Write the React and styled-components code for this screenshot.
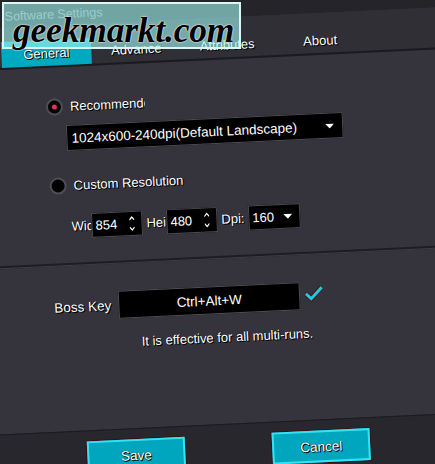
import React from 'react';
import styled, { createGlobalStyle } from 'styled-components';

const GlobalStyle = createGlobalStyle`
  html, body {
    margin: 0;
    padding: 0;
    width: 435px;
    height: 464px;
    overflow: hidden;
    background: #2a2930;
  }
  body {
    font-family: "Liberation Sans", Arial, sans-serif;
  }
`;

const Stage = styled.div`
  position: relative;
  width: 435px;
  height: 464px;
  overflow: hidden;
`;

// the photo is slightly tilted, so the whole window is rotated a touch
const Window = styled.div`
  width: 485px;
  height: 514px;
  margin: -25px;
  display: flex;
  flex-direction: column;
  background: #35343c;
  transform: rotate(-2.7deg);
  color: #fff;
  font-size: 13px;
  text-shadow: 0 0 1px #000, 1px 1px 0 #000;
`;

const TitleBar = styled.div`
  height: 43px;
  box-sizing: border-box;
  display: flex;
  align-items: flex-end;
  padding: 0 0 4px 40px;
  background: #252429;
  color: #8d8c93;
  font-size: 12.5px;
  line-height: 14px;
  text-shadow: none;
`;

const TabBar = styled.div`
  height: 40px;
  display: flex;
  align-items: flex-end;
  padding-left: 35px;
  background: #302f36;
  border-bottom: 2px solid #1b1a1f;
`;

const Tab = styled.div`
  width: ${p => p.$w || 90}px;
  height: 26px;
  display: flex;
  align-items: center;
  justify-content: center;
  background: ${p => (p.$active ? '#00a8c0' : 'transparent')};
`;

const Body = styled.div`
  flex: 1;
  display: flex;
  flex-direction: column;
`;

const TopSection = styled.div`
  padding: 31px 0 0 77px;
  display: flex;
  flex-direction: column;
`;

const RadioRow = styled.div`
  display: flex;
  align-items: center;
  gap: 7px;
  height: 17px;
  margin-top: ${p => p.$gap || 0}px;
`;

const Radio = styled.span`
  position: relative;
  width: 17px;
  height: 17px;
  box-sizing: border-box;
  border-radius: 50%;
  background: #000;
  border: 2px solid #4f4e55;
  &::after {
    content: '';
    display: ${p => (p.$checked ? 'block' : 'none')};
    position: absolute;
    left: 4px;
    top: 4px;
    width: 5px;
    height: 5px;
    border-radius: 50%;
    background: #ec2a72;
  }
`;

const Clip = styled.span`
  width: ${p => p.$w}px;
  overflow: hidden;
  white-space: nowrap;
  flex-shrink: 0;
`;

const Select = styled.div`
  margin: 10px 0 0 19px;
  width: 277px;
  height: 26px;
  box-sizing: border-box;
  background: #000;
  border: 1px solid #4d4c53;
  display: flex;
  align-items: center;
  justify-content: space-between;
  padding: 0 8px 0 4px;
  font-size: 13.5px;
`;

const Caret = () => (
  <svg width="9" height="5" viewBox="0 0 9 5">
    <path d="M0 0 H9 L4.5 5 Z" fill="#fff" />
  </svg>
);

const SizeRow = styled.div`
  margin: 20px 0 0 20px;
  display: flex;
  align-items: center;
  height: 25px;
`;

const Field = styled.div`
  width: ${p => p.$w}px;
  height: 25px;
  box-sizing: border-box;
  background: #000;
  border: 1px solid #48474e;
  display: flex;
  align-items: center;
  justify-content: space-between;
  padding: 0 7px 0 3px;
  margin: 0 4px 0 0;
`;

const Spin = () => (
  <svg width="5" height="15" viewBox="0 0 5 15">
    <path d="M0 4 L2.5 1 L5 4" stroke="#fff" strokeWidth="1.2" fill="none" />
    <path d="M0 11 L2.5 14 L5 11" stroke="#fff" strokeWidth="1.2" fill="none" />
  </svg>
);

const Divider = styled.div`
  margin-top: 24px;
  height: 2px;
  background: #1e1d22;
  border-bottom: 1px solid #3e3d45;
`;

const BossSection = styled.div`
  padding-left: 76px;
  margin-top: 27px;
`;

const BossRow = styled.div`
  display: flex;
  align-items: center;
  gap: 4px;
  font-size: 13.5px;
`;

const BossLabel = styled.span`
  margin-right: 3px;
`;

const KeyBox = styled.div`
  width: 182px;
  height: 28px;
  box-sizing: border-box;
  background: #000;
  border: 1px solid #4f4e55;
  display: flex;
  align-items: center;
  justify-content: center;
`;

const Check = () => (
  <svg width="20" height="16" viewBox="0 0 20 16" style={{ marginTop: -4 }}>
    <path d="M2 8 L7 13 L18 2" stroke="#4a1218" strokeWidth="5" fill="none" />
    <path d="M2 8 L7 13 L18 2" stroke="#1ccbe3" strokeWidth="3" fill="none" />
  </svg>
);

const Note = styled.div`
  margin-top: 16px;
  padding-left: 10px;
  text-align: center;
  line-height: 16px;
`;

const Footer = styled.div`
  margin-top: auto;
  height: 65px;
  box-sizing: border-box;
  background: #28272d;
  border-top: 1px solid #1c1b20;
  display: flex;
  gap: 87px;
  padding: 10px 0 0 102px;
`;

const Button = styled.div`
  width: 98px;
  height: 32px;
  box-sizing: border-box;
  background: #00a6bd;
  border: 2px solid #35e2f2;
  box-shadow: 0 0 0 1px #3a1016;
  display: flex;
  align-items: center;
  justify-content: center;
  font-size: 13.5px;
`;

const Watermark = styled.div`
  position: absolute;
  top: 2px;
  left: 2px;
  width: 239px;
  height: 47px;
  box-sizing: border-box;
  border: 2px solid #d9f7f5;
  background: rgba(160, 245, 240, 0.62);
  padding: 9px 0 0 9px;
  font-family: "Liberation Serif", "Times New Roman", serif;
  font-weight: bold;
  font-style: italic;
  font-size: 35.5px;
  line-height: 35px;
  letter-spacing: -0.2px;
  color: #000;
  white-space: nowrap;
  text-shadow: 0 0 2px #fff, 0 0 1px #fff;
`;

export default function App() {
  return (
    <Stage>
      <GlobalStyle />
      <Window>
        <TitleBar>Software Settings</TitleBar>
        <TabBar>
          <Tab $active $w={90}>General</Tab>
          <Tab $w={90}>Advance</Tab>
          <Tab $w={92}>Attributes</Tab>
          <Tab $w={94}>About</Tab>
        </TabBar>
        <Body>
          <TopSection>
            <RadioRow>
              <Radio $checked />
              <Clip $w={75}>Recommended</Clip>
            </RadioRow>
            <Select>
              <span>1024x600-240dpi(Default Landscape)</span>
              <Caret />
            </Select>
            <RadioRow $gap={26}>
              <Radio />
              <span>Custom Resolution</span>
            </RadioRow>
            <SizeRow>
              <Clip $w={20}>Width</Clip>
              <Field $w={51}>
                <span>854</span>
                <Spin />
              </Field>
              <Clip $w={20}>Height</Clip>
              <Field $w={51}>
                <span>480</span>
                <Spin />
              </Field>
              <Clip $w={27}>Dpi:</Clip>
              <Field $w={52}>
                <span>160</span>
                <Caret />
              </Field>
            </SizeRow>
          </TopSection>
          <Divider />
          <BossSection>
            <BossRow>
              <BossLabel>Boss Key</BossLabel>
              <KeyBox>Ctrl+Alt+W</KeyBox>
              <Check />
            </BossRow>
          </BossSection>
          <Note>It is effective for all multi-runs.</Note>
          <Footer>
            <Button>Save</Button>
            <Button>Cancel</Button>
          </Footer>
        </Body>
      </Window>
      <Watermark>geekmarkt.com</Watermark>
    </Stage>
  );
}
